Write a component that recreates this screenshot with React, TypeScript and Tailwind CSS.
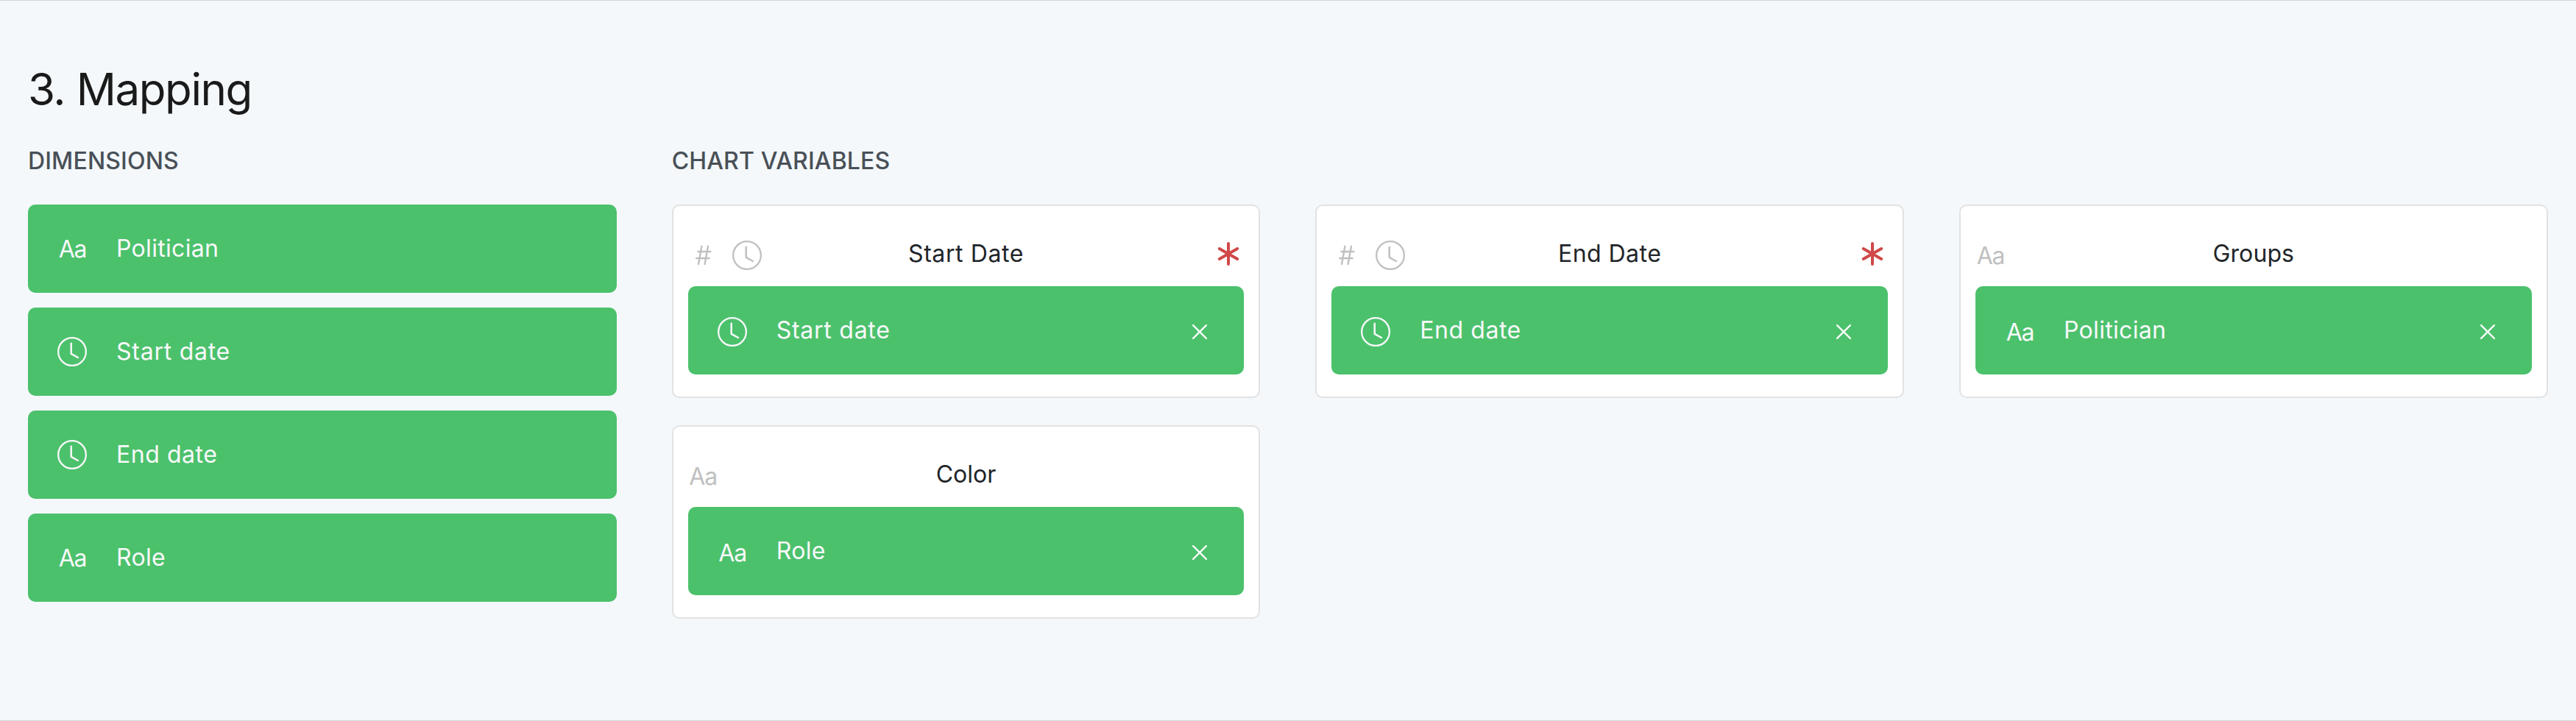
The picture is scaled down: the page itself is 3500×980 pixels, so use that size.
import React from "react";

type Kind = "text" | "date" | "number";

function Clock() {
  return (
    <svg className="block size-10" viewBox="0 0 40 40" fill="none" stroke="currentColor" strokeWidth="2.3">
      <circle cx="20" cy="20" r="18.85" />
      <path d="M18.7 8.8V22.8L28 28" strokeWidth="2.5" strokeLinecap="round" strokeLinejoin="round" />
    </svg>
  );
}

function Hash() {
  return (
    <svg className="mx-[10px] mt-[6px] block h-7 w-[22px]" viewBox="0 0 22 28" fill="none" stroke="currentColor" strokeWidth="2.4" strokeLinecap="round">
      <path d="M8.4 1.6L4 26M17 1.6L12.6 26M3.4 9H20.4M1.3 18H18.6" />
    </svg>
  );
}

function Cross() {
  return (
    <svg className="mt-1 block size-5" viewBox="0 0 20 20" fill="none" stroke="white" strokeWidth="2.2" strokeLinecap="round">
      <path d="M1.1 1.1L18.9 18.9M18.9 1.1L1.1 18.9" />
    </svg>
  );
}

function Asterisk() {
  return (
    <svg className="block h-8 w-[30px]" viewBox="0 0 30 32" fill="none" stroke="#d04848" strokeWidth="4" strokeLinecap="round">
      <path d="M15 2V30M2.8 9L27.2 23M27.2 9L2.8 23" />
    </svg>
  );
}

function KindIcon({ kind }: { kind: Kind }) {
  if (kind === "date") return <Clock />;
  if (kind === "number") return <Hash />;
  return <span className="block size-10 pl-px pt-px text-center text-[32px] leading-10 tracking-[-1.2px]">Aa</span>;
}

const tracking: Record<string, string> = {
  "Start date": "tracking-[0.75px]",
  "End date": "tracking-[0.55px]",
  "Start Date": "tracking-[0.6px]",
  "End Date": "tracking-[0.45px]",
  Politician: "tracking-[0.32px]",
  Role: "tracking-[0.35px]",
  Groups: "tracking-[0.1px]",
  Color: "tracking-[0px]",
};

function Pill({ kind, label, removable }: { kind: Kind; label: string; removable?: boolean }) {
  return (
    <div className="flex h-[120px] items-center rounded-[10px] bg-[#4cc16c] pl-10 pr-[50px] text-[#f8f9fa]">
      <span className={removable ? "pt-1" : ""}><KindIcon kind={kind} /></span>
      <span className={`ml-10 flex-1 whitespace-nowrap text-[32px] leading-[48px] ${tracking[label]}`}>{label}</span>
      {removable && <Cross />}
    </div>
  );
}

interface CardProps {
  kinds: Kind[];
  title: string;
  required?: boolean;
  value: string;
  valueKind: Kind;
}

function Card({ kinds, title, required, value, valueKind }: CardProps) {
  return (
    <div className="h-[263px] rounded-[10px] border-2 border-[#e2e2e2] bg-white px-5">
      <div className="grid h-[109px] grid-cols-[1fr_auto_1fr] items-center pt-5">
        <div className="flex gap-[18px] pt-[5px] text-[#c0c0c0]">
          {kinds.map((k) => <KindIcon key={k} kind={k} />)}
        </div>
        <div className={`text-[32px] leading-[48px] text-[#212529] ${tracking[title]}`}>{title}</div>
        <div className="flex justify-end pr-[6px]">{required && <Asterisk />}</div>
      </div>
      <Pill kind={valueKind} label={value} removable />
    </div>
  );
}

function Heading({ children }: { children: string }) {
  return <h2 className="h-[84px] pt-px text-[32px] font-medium leading-[48px] tracking-[0.15px] text-[#495057]">{children}</h2>;
}

export default function App() {
  return (
    <main className="h-[980px] w-[3500px] border-y border-[#d5d5d5] bg-[#f4f8fb] pl-[38px] pr-[38.32px] pt-[75px] font-['Inter',sans-serif]">
      <h1 className="h-[118px] text-[60px] leading-[90px] tracking-[-1.4px] text-[#1a1a1a]">3. Mapping</h1>
      <div className="grid grid-cols-4 gap-x-[74.96px]">
        <section>
          <Heading>DIMENSIONS</Heading>
          <div className="flex flex-col gap-5">
            <Pill kind="text" label="Politician" />
            <Pill kind="date" label="Start date" />
            <Pill kind="date" label="End date" />
            <Pill kind="text" label="Role" />
          </div>
        </section>
        <section className="col-span-3">
          <Heading>CHART VARIABLES</Heading>
          <div className="grid grid-cols-3 gap-x-[74.96px] gap-y-[37px]">
            <Card kinds={["number", "date"]} title="Start Date" required value="Start date" valueKind="date" />
            <Card kinds={["number", "date"]} title="End Date" required value="End date" valueKind="date" />
            <Card kinds={["text"]} title="Groups" value="Politician" valueKind="text" />
            <Card kinds={["text"]} title="Color" value="Role" valueKind="text" />
          </div>
        </section>
      </div>
    </main>
  );
}
